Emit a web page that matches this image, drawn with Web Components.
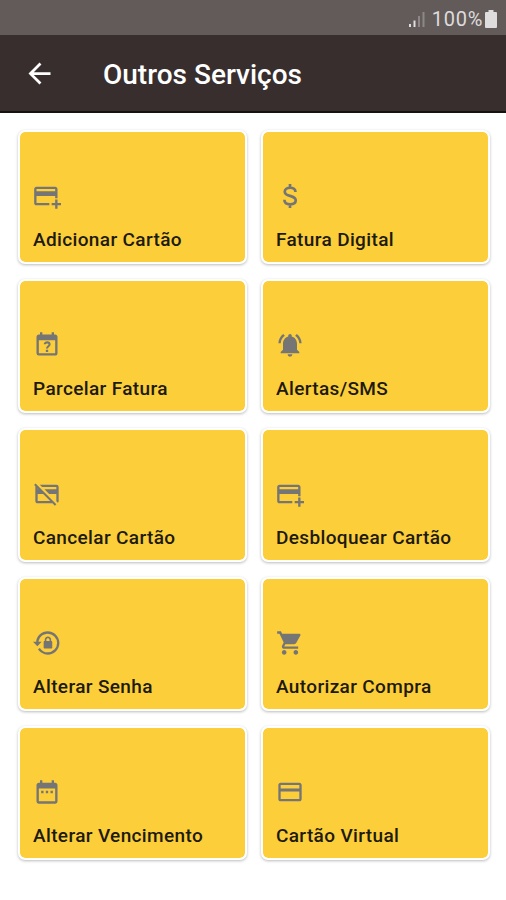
<!DOCTYPE html>
<html lang="pt-BR">
<head>
<meta charset="utf-8">
<title>Outros Serviços</title>
<style>
  body {
    margin: 0;
    background: #fff;
    font-family: Roboto, "Liberation Sans", sans-serif;
  }
</style>
</head>
<body>
<services-screen>
  <status-bar slot="top">100%</status-bar>
  <app-header slot="top">Outros Serviços</app-header>
  <service-card icon="card-plus">Adicionar Cartão</service-card>
  <service-card icon="dollar">Fatura Digital</service-card>
  <service-card icon="calendar-question">Parcelar Fatura</service-card>
  <service-card icon="bell">Alertas/SMS</service-card>
  <service-card icon="card-off">Cancelar Cartão</service-card>
  <service-card icon="card-plus">Desbloquear Cartão</service-card>
  <service-card icon="lock-reset">Alterar Senha</service-card>
  <service-card icon="cart">Autorizar Compra</service-card>
  <service-card icon="calendar">Alterar Vencimento</service-card>
  <service-card icon="card">Cartão Virtual</service-card>
</services-screen>

<script>
const ICONS = {
  'card-plus': '<path d="M21,18H24V20H21V23H19V20H16V18H19V15H21V18M19,8V6H3V8H19M19,12H3V18H14V20H3C1.89,20 1,19.1 1,18V6C1,4.89 1.89,4 3,4H19C20.1,4 21,4.89 21,6V14H19V12Z"/>',
  'dollar': '<path fill="none" stroke="currentColor" stroke-width="2.3" d="M16.7,8.6C16.7,6.4 14.8,4.9 12.1,4.9C9.4,4.9 7.5,6.3 7.5,8.3C7.5,10.5 9.3,11.2 12,11.9C15,12.7 16.9,13.5 16.9,15.7C16.9,17.9 15,19.2 12.2,19.2C9.2,19.2 7.2,17.7 7.2,15.3M12,1.7V5M12,19V22.3"/>',
  'calendar-question': '<path d="M6,1V3H5C3.89,3 3,3.89 3,5V19A2,2 0 0,0 5,21H19C20.11,21 21,20.1 21,19V5C21,3.89 20.1,3 19,3H18V1H16V3H8V1H6M5,8H19V19H5V8M11,16V18H13V16H11Z"/><path fill="none" stroke="currentColor" stroke-width="1.8" d="M10.100,11.4C10.100,9.2 14.200,9.2 14.200,11.5C14.200,13.1 12,13.1 12,15"/>',
  'bell': '<path d="M7.58 4.08L6.15 2.65C3.75 4.48 2.17 7.3 2.03 10.5h2c.15-2.65 1.51-4.97 3.55-6.42zm12.39 6.42h2c-.15-3.2-1.73-6.02-4.12-7.85l-1.42 1.43c2.02 1.45 3.39 3.77 3.54 6.42zM18 11c0-3.07-1.64-5.64-4.5-6.32V4c0-.83-.67-1.5-1.5-1.5s-1.5.67-1.5 1.5v.68C7.63 5.36 6 7.92 6 11v5l-2 2v1h16v-1l-2-2v-5zm-6 11c.14 0 .27-.01.4-.04.65-.14 1.18-.58 1.44-1.18.1-.24.15-.5.15-.78h-4c.01 1.1.9 2 2.01 2z"/>',
  'card-off': '<path d="M0.93,4.2L2.21,2.93L20,20.72L18.73,22L16.73,20H4C2.89,20 2,19.1 2,18V6C2,5.78 2.04,5.57 2.11,5.38L0.93,4.2M20,8V6H7.82L5.82,4H20A2,2 0 0,1 22,6V18C22,18.6 21.74,19.13 21.32,19.5L19.82,18H20V12H13.82L9.82,8H20M4,8H4.73L4,7.27V8M4,12V18H14.73L8.73,12H4Z"/>',
  'lock-reset': '<path d="M12.63,2C18.16,2 22.64,6.5 22.64,12C22.64,17.5 18.16,22 12.63,22C9.12,22 6.05,20.18 4.26,17.43L5.84,16.18C7.25,18.47 9.76,20 12.64,20A8,8 0 0,0 20.64,12A8,8 0 0,0 12.64,4C8.56,4 5.2,7.06 4.71,11H7.47L3.73,14.73L0,11H2.69C3.19,5.95 7.45,2 12.63,2M15.59,10.24C16.09,10.25 16.5,10.65 16.5,11.16V15.77C16.5,16.27 16.09,16.69 15.58,16.69H10.05C9.54,16.69 9.13,16.27 9.13,15.77V11.16C9.13,10.65 9.54,10.25 10.04,10.24V9.23C10.04,7.7 11.29,6.46 12.81,6.46C14.34,6.46 15.59,7.7 15.59,9.23V10.24M12.81,7.86C12.06,7.86 11.44,8.47 11.44,9.23V10.24H14.19V9.23C14.19,8.47 13.57,7.86 12.81,7.86Z"/>',
  'cart': '<path d="M7 18c-1.1 0-1.99.9-1.99 2S5.9 22 7 22s2-.9 2-2-.9-2-2-2zM1 2v2h2l3.6 7.59-1.35 2.45c-.16.28-.25.61-.25.96 0 1.1.9 2 2 2h12v-2H7.42c-.14 0-.25-.11-.25-.25l.03-.12.9-1.63h7.45c.75 0 1.41-.41 1.75-1.03l3.58-6.49A1 1 0 0 0 20.01 4H5.21l-.94-2H1zm16 16c-1.1 0-1.99.9-1.99 2s.89 2 1.99 2 2-.9 2-2-.9-2-2-2z"/>',
  'calendar': '<path d="M9 11H7v2h2v-2zm4 0h-2v2h2v-2zm4 0h-2v2h2v-2zm2-7h-1V2h-2v2H8V2H6v2H5c-1.11 0-1.99.9-1.99 2L3 20c0 1.1.89 2 2 2h14c1.1 0 2-.9 2-2V6c0-1.1-.9-2-2-2zm0 16H5V9h14v11z"/>',
  'card': '<path d="M20 4H4c-1.11 0-1.99.89-1.99 2L2 18c0 1.11.89 2 2 2h16c1.11 0 2-.89 2-2V6c0-1.11-.89-2-2-2zm0 14H4v-6.500h16v6.500zm0-9H4V6h16v3z"/>',
};

class ServicesScreen extends HTMLElement {
  constructor() {
    super();
    this.attachShadow({ mode: 'open' }).innerHTML = `
      <style>
        :host {
          display: flex;
          flex-direction: column;
          height: 900px;
          overflow: hidden;
        }
        main {
          display: grid;
          grid-template-columns: 1fr 1fr;
          grid-auto-rows: 134px;
          gap: 15px 14px;
          padding: 17px 16px 0 18px;
        }
      </style>
      <slot name="top"></slot>
      <main><slot></slot></main>
    `;
  }
}

class StatusBar extends HTMLElement {
  constructor() {
    super();
    this.attachShadow({ mode: 'open' }).innerHTML = `
      <style>
        :host {
          display: flex;
          align-items: center;
          justify-content: flex-end;
          flex: none;
          box-sizing: border-box;
          height: 35px;
          padding: 2px 9px 0 0;
          background: #635b5a;
          color: #dedcdc;
          font-size: 20px;
          letter-spacing: 0.7px;
        }
        span { margin: 0 2px 0 7px; }
      </style>
      <svg width="16" height="16" viewBox="0 0 16 16" fill="currentColor">
        <path d="M0 13h2v3H0zM4.5 9.5h2V16h-2z"/>
        <path opacity=".35" d="M9 5h2v11H9zM13.5 1h2v15h-2z"/>
      </svg>
      <span><slot></slot></span>
      <svg width="12" height="18" viewBox="0 0 12 18" fill="currentColor">
        <path d="M3.5 0h5v2H11a1 1 0 0 1 1 1v14a1 1 0 0 1-1 1H1a1 1 0 0 1-1-1V3a1 1 0 0 1 1-1h2.5z"/>
      </svg>
    `;
  }
}

class AppHeader extends HTMLElement {
  constructor() {
    super();
    this.attachShadow({ mode: 'open' }).innerHTML = `
      <style>
        :host {
          display: flex;
          align-items: center;
          flex: none;
          gap: 47px;
          box-sizing: border-box;
          height: 78px;
          padding: 0 0 0 23px;
          background: #382e2d;
          border-bottom: 2px solid #171110;
          color: #fff;
        }
        h1 {
          margin: 4px 0 0;
          font-size: 28px;
          font-weight: 500;
          line-height: 32px;
        }
      </style>
      <svg width="33" height="33" viewBox="0 0 24 24" fill="currentColor">
        <path d="M20 11H7.83l5.59-5.59L12 4l-8 8 8 8 1.41-1.41L7.83 13H20v-2z"/>
      </svg>
      <h1><slot></slot></h1>
    `;
  }
}

class ServiceCard extends HTMLElement {
  constructor() {
    super();
    this.attachShadow({ mode: 'open' }).innerHTML = `
      <style>
        :host {
          display: flex;
          flex-direction: column;
          justify-content: flex-end;
          box-sizing: border-box;
          padding: 0 0 10px 13px;
          border: 2px solid #fff;
          border-radius: 7px;
          background: #fcce3a;
          background-clip: padding-box;
          box-shadow: 0 1px 3px rgba(0, 0, 0, 0.27);
          color: #1d1a10;
          font-size: 19px;
          font-weight: 500;
          line-height: 24px;
          letter-spacing: 0.36px;
          white-space: nowrap;
        }
        svg {
          display: block;
          margin-bottom: 18px;
          color: #757575;
        }
      </style>
      <svg width="28" height="28" viewBox="0 0 24 24" fill="currentColor"></svg>
      <span><slot></slot></span>
    `;
  }

  connectedCallback() {
    this.shadowRoot.querySelector('svg').innerHTML = ICONS[this.getAttribute('icon')] || '';
  }
}

customElements.define('services-screen', ServicesScreen);
customElements.define('status-bar', StatusBar);
customElements.define('app-header', AppHeader);
customElements.define('service-card', ServiceCard);
</script>
</body>
</html>
